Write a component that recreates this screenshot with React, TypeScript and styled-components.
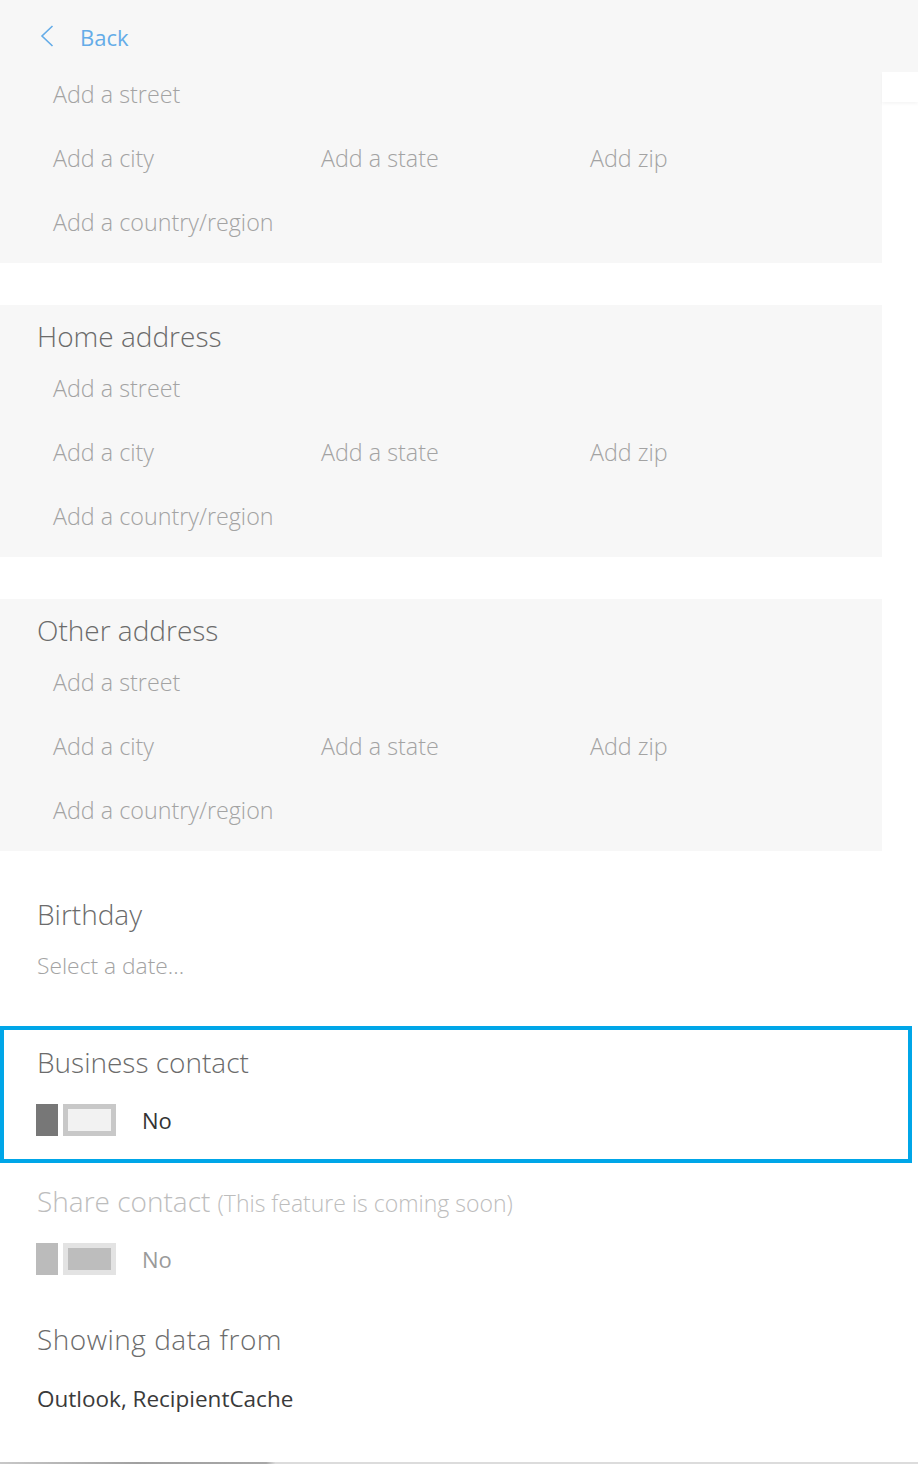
import React from "react";
import styled, { createGlobalStyle } from "styled-components";

const Global = createGlobalStyle`
  html, body { margin: 0; padding: 0; background: #ffffff; }
  body { font-family: "Open Sans", "Noto Sans", sans-serif; }
  * { box-sizing: border-box; }
`;

const Page = styled.div`
  width: 918px;
  height: 1464px;
  position: relative;
  overflow: hidden;
  background: #fff;
  display: flex;
  flex-direction: column;
`;

const Header = styled.div`
  height: 72px;
  flex: none;
  background: #f7f7f7;
  display: flex;
  align-items: center;
  padding-left: 40px;
  gap: 26px;
  color: #64ace8;
`;

const BackLabel = styled.span`
  font-size: 22px;
  font-weight: 400;
  line-height: 28px;
  margin-top: 2px;
  color: #64ace8;
`;

const Upper = styled.div`
  display: flex;
  align-items: flex-start;
`;

const Body = styled.div`
  display: flex;
  flex-direction: column;
  width: 882px;
`;

const SideTab = styled.div`
  width: 36px;
  height: 30px;
  background: #fff;
  box-shadow: 0 2px 3px rgba(0, 0, 0, 0.04);
`;

const Card = styled.section<{ $first?: boolean }>`
  background: #f7f7f7;
  padding: ${(p) => (p.$first ? "2px" : "15px")} 0 21px 37px;
  margin-top: ${(p) => (p.$first ? "0" : "42px")};
  display: flex;
  flex-direction: column;
`;

const Title = styled.h2<{ $muted?: boolean; $wide?: boolean }>`
  margin: 0;
  font-size: 28px;
  font-weight: 300;
  line-height: 32px;
  letter-spacing: ${(p) => (p.$wide ? "0.5px" : "0")};
  color: ${(p) => (p.$muted ? "#bdbdbd" : "#6b6b6b")};
  white-space: nowrap;
`;

const Note = styled.span`
  font-size: 23px;
  color: #bdbdbd;
`;

const Fields = styled.div<{ $first?: boolean }>`
  display: grid;
  grid-template-columns: 268px 269px auto;
  row-gap: 24px;
  padding-left: 16px;
  margin-top: ${(p) => (p.$first ? "0" : "16px")};
`;

const Field = styled.div<{ $span?: boolean }>`
  height: 40px;
  display: flex;
  align-items: center;
  font-size: 23.3px;
  font-weight: 300;
  color: #a3a3a3;
  grid-column: ${(p) => (p.$span ? "1 / -1" : "auto")};
  white-space: nowrap;
`;

const Plain = styled.div<{ $top: number }>`
  padding-left: 37px;
  margin-top: ${(p) => p.$top}px;
  display: flex;
  flex-direction: column;
`;

const Value = styled.div<{ $dark?: boolean; $top: number }>`
  margin-top: ${(p) => p.$top}px;
  font-size: ${(p) => (p.$dark ? "22.5px" : "22.8px")};
  font-weight: ${(p) => (p.$dark ? 400 : 300)};
  line-height: 28px;
  color: ${(p) => (p.$dark ? "#3a3a3a" : "#a3a3a3")};
`;

const Focus = styled.div`
  margin-top: 46px;
  width: 912px;
  border: 4px solid #00a6e8;
  padding: 16px 0 23px 33px;
  display: flex;
  flex-direction: column;
`;

const ToggleRow = styled.div<{ $top: number }>`
  margin-top: ${(p) => p.$top}px;
  display: flex;
  align-items: center;
  margin-left: -1px;
`;

const Thumb = styled.div<{ $disabled?: boolean }>`
  width: 22px;
  height: 32px;
  background: ${(p) => (p.$disabled ? "#bbbbbb" : "#777777")};
`;

const Track = styled.div<{ $disabled?: boolean }>`
  margin-left: 5px;
  width: 53px;
  height: 32px;
  border: 5px solid ${(p) => (p.$disabled ? "#e3e3e3" : "#c8c8c8")};
  background: ${(p) => (p.$disabled ? "#bdbdbd" : "#f2f2f2")};
`;

const ToggleText = styled.span<{ $disabled?: boolean }>`
  margin-left: 26px;
  font-size: 22px;
  font-weight: 400;
  color: ${(p) => (p.$disabled ? "#9a9a9a" : "#333333")};
`;

const ScrollEdge = styled.div`
  position: absolute;
  left: 0;
  right: 0;
  bottom: 0;
  height: 2px;
  background: linear-gradient(to right, #c8c8c8 0%, #a0a0a0 15%, #a8a8a8 29%, #dcdcdc 30%, #dcdcdc 100%);
`;

const Chevron = () => (
  <svg width="14" height="22" viewBox="0 0 14 22" fill="none">
    <path d="M12.5 1 L2 11 L12.5 21" stroke="#64ace8" strokeWidth="1.6" />
  </svg>
);

const AddressFields = ({ first }: { first?: boolean }) => (
  <Fields $first={first}>
    <Field $span>Add a street</Field>
    <Field>Add a city</Field>
    <Field>Add a state</Field>
    <Field>Add zip</Field>
    <Field $span>Add a country/region</Field>
  </Fields>
);

const Toggle = ({ disabled, top }: { disabled?: boolean; top: number }) => (
  <ToggleRow $top={top}>
    <Thumb $disabled={disabled} />
    <Track $disabled={disabled} />
    <ToggleText $disabled={disabled}>No</ToggleText>
  </ToggleRow>
);

export default function App() {
  return (
    <Page>
      <Global />
      <Header>
        <Chevron />
        <BackLabel>Back</BackLabel>
      </Header>
      <Upper>
        <Body>
          <Card $first>
            <AddressFields first />
          </Card>
          <Card>
            <Title>Home address</Title>
            <AddressFields />
          </Card>
          <Card>
            <Title>Other address</Title>
            <AddressFields />
          </Card>
        </Body>
        <SideTab />
      </Upper>
      <Plain $top={47}>
        <Title>Birthday</Title>
        <Value $top={22}>Select a date...</Value>
      </Plain>
      <Focus>
        <Title>Business contact</Title>
        <Toggle top={26} />
      </Focus>
      <Plain $top={22}>
        <Title $muted>
          Share contact <Note>(This feature is coming soon)</Note>
        </Title>
        <Toggle disabled top={24} />
      </Plain>
      <Plain $top={48}>
        <Title $wide>Showing data from</Title>
        <Value $dark $top={30}>Outlook, RecipientCache</Value>
      </Plain>
      <ScrollEdge />
    </Page>
  );
}
